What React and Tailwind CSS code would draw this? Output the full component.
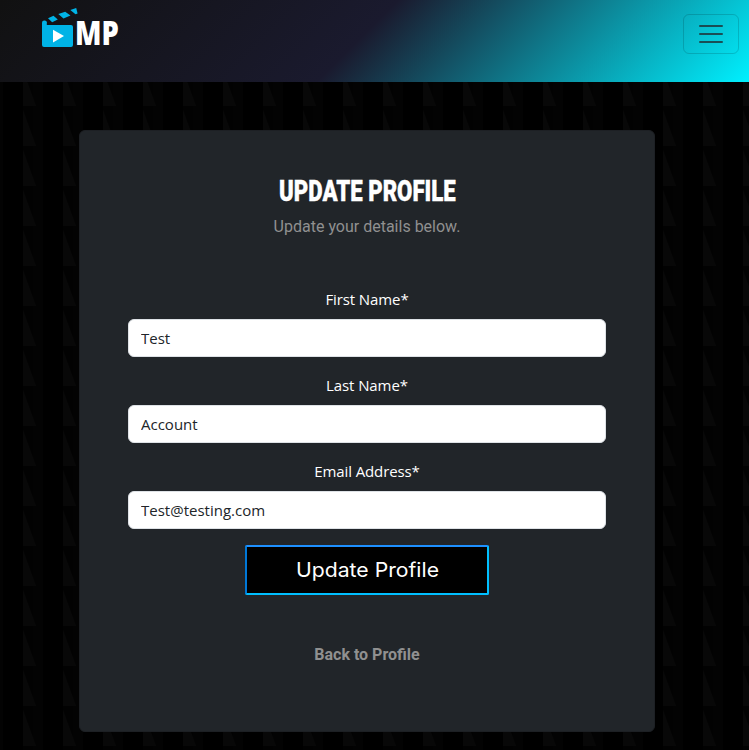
function Backdrop() {
  return (
    <svg className="absolute inset-0 -z-10 h-full w-full" aria-hidden="true">
      <defs>
        <pattern id="fins" width="40" height="40" x="3" y="26" patternUnits="userSpaceOnUse">
          <rect width="40" height="40" fill="#000" />
          <rect x="20" width="20" height="40" fill="#020202" />
          <rect x="30" width="10" height="40" fill="#030303" />
          <path d="M20 4 L33 40 H20 Z" fill="#080808" />
        </pattern>
      </defs>
      <rect width="100%" height="100%" fill="url(#fins)" />
    </svg>
  );
}

function Logo() {
  return (
    <a className="flex h-[48px] items-start">
      <svg className="shrink-0" width="37" height="48" viewBox="0 0 37 48" fill="#00b3e6">
        <path d="M2.200 20.500a2.400 2.400 0 0 1 2.600 3.200V25H29a2 2 0 0 1 2 2v18a2 2 0 0 1-2 2H2a2 2 0 0 1-2-2V22.700a2.200 2.200 0 0 1 2.200-2.200Z" />
        <path d="M6 18.200 11.500 15.800 15.800 19.500 10.200 22.300ZM16.300 14 23.200 11.800 28.500 15.500 21.500 18.400ZM28.300 10 34.200 8 35.600 13.500 33.500 14.300Z" />
        <path d="M11 29.700 22 36 11 42.500Z" fill="#fff" />
      </svg>
      <span className="-ml-[4px] mt-[16px] block w-[44px] origin-left scale-x-[0.83] text-[33px] leading-[34px] font-extrabold text-white">MP</span>
    </a>
  );
}

function Field({ label, value, type = "text" }) {
  return (
    <label className="flex flex-col items-center">
      <span className="mb-2 h-6 text-[15px] leading-6 tracking-[-0.1px] text-white">{label}</span>
      <input
        type={type}
        defaultValue={value}
        className="h-[38px] w-full rounded-[6px] border border-[#dee2e6] bg-white px-3 text-[15px] text-[#212529] outline-none"
      />
    </label>
  );
}

export default function App() {
  return (
    <div className="relative isolate h-[750px] w-full overflow-hidden bg-black font-['Open_Sans','Noto_Sans',sans-serif]">
      <Backdrop />
      <header className="flex h-[82px] items-start justify-between bg-[linear-gradient(135deg,#111111,#1a1a2e_48%,#00f0ff)] pr-[10px] pl-[42px]">
        <Logo />
        <button className="mt-[14px] flex h-10 w-14 items-center justify-center rounded-[6px] border border-black/15" aria-label="Menu">
          <svg width="30" height="30" viewBox="0 0 30 30" stroke="#212529" strokeOpacity=".75" strokeWidth="2" strokeLinecap="round">
            <path d="M4 7h22M4 15h22M4 23h22" />
          </svg>
        </button>
      </header>
      <main className="mt-12 ml-[79px] flex h-[602px] w-[576px] flex-col items-center rounded-[6px] border border-[#1d2024] bg-[#212529] px-12 pt-[42px]">
        <h1 className="scale-x-[0.74] font-['Roboto',sans-serif] text-[30px] leading-9 font-black whitespace-nowrap text-white [-webkit-text-stroke:0.4px_white]">UPDATE PROFILE</h1>
        <p className="mt-[6px] font-['Roboto',sans-serif] text-[16px] leading-6 text-[#909090]">Update your details below.</p>
        <form className="mt-[48px] flex w-[478px] flex-col gap-4">
          <Field label="First Name*" value="Test" />
          <Field label="Last Name*" value="Account" />
          <Field label="Email Address*" value="Test@testing.com" type="email" />
          <button type="button" className="h-[50px] w-[244px] self-center rounded-[2px] border-2 border-t-[#1e90ff] border-r-[#00bfff] border-b-[#00bfff] border-l-[#0078d7] bg-black font-['Inter',sans-serif] text-[20px] text-white">
            <span className="inline-block scale-x-[1.06]">Update Profile</span>
          </button>
        </form>
        <a className="mt-[48px] font-['Roboto',sans-serif] text-[16px] leading-6 font-bold text-[#909090]">Back to Profile</a>
      </main>
    </div>
  );
}
